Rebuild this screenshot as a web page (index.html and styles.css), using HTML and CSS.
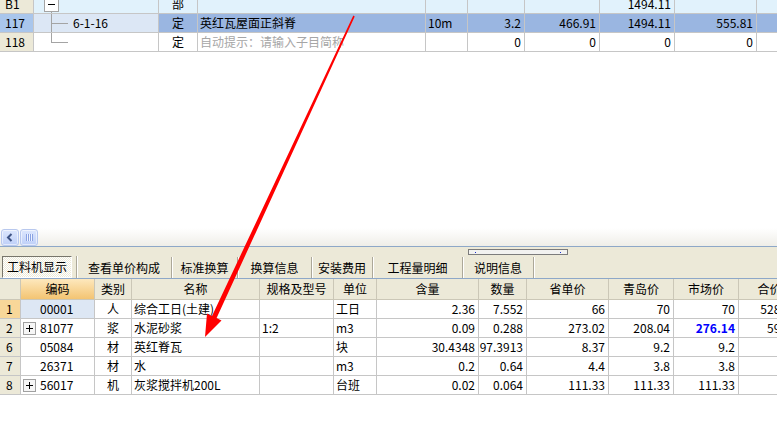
FILE: index.html
```html
<!DOCTYPE html>
<html lang="zh">
<head>
<meta charset="utf-8">
<title>工料机显示</title>
<link rel="stylesheet" href="styles.css">
</head>
<body>
<div class="app">
  <div class="top-pane">
    <div class="grid top-grid">
      <div class="c rh">B1</div>
      <div class="c tree t-root b1"><span class="tbox"></span></div>
      <div class="c ctr b1">部</div>
      <div class="c b1"></div>
      <div class="c b1"></div>
      <div class="c b1"></div>
      <div class="c b1"></div>
      <div class="c r b1">1494.11</div>
      <div class="c b1"></div>
      <div class="c b1"></div>

      <div class="c rh rh-sel">117</div>
      <div class="c tree t-mid sel-soft">6-1-16</div>
      <div class="c ctr sel">定</div>
      <div class="c sel">英红瓦屋面正斜脊</div>
      <div class="c sel">10m</div>
      <div class="c r sel">3.2</div>
      <div class="c r sel">466.91</div>
      <div class="c r sel">1494.11</div>
      <div class="c r sel">555.81</div>
      <div class="c sel"></div>

      <div class="c rh">118</div>
      <div class="c tree t-last"></div>
      <div class="c ctr">定</div>
      <div class="c hint">自动提示：请输入子目简称</div>
      <div class="c"></div>
      <div class="c r">0</div>
      <div class="c r">0</div>
      <div class="c r">0</div>
      <div class="c r">0</div>
      <div class="c"></div>
    </div>
  </div>

  <div class="hscroll">
    <span class="sbtn"><svg width="8" height="9" viewBox="0 0 8 9"><path d="M5.5 1 L2 4.5 L5.5 8" fill="none" stroke="#3f5485" stroke-width="2"/></svg></span>
    <span class="sbtn thumb"><span class="grip"></span></span>
  </div>

  <div class="tabbar">
    <div class="splitter"><i></i><i></i></div>
    <div class="tab first"><span class="active">工料机显示</span></div>
    <div class="tab t2">查看单价构成</div>
    <div class="tab t3">标准换算</div>
    <div class="tab t4">换算信息</div>
    <div class="tab t5">安装费用</div>
    <div class="tab t6">工程量明细</div>
    <div class="tab t7">说明信息</div>
  </div>

  <div class="grid bottom-grid">
    <div class="c h"></div>
    <div class="c h h-act">编码</div>
    <div class="c h">类别</div>
    <div class="c h">名称</div>
    <div class="c h">规格及型号</div>
    <div class="c h">单位</div>
    <div class="c h">含量</div>
    <div class="c h">数量</div>
    <div class="c h">省单价</div>
    <div class="c h">青岛价</div>
    <div class="c h">市场价</div>
    <div class="c h">合价</div>

    <div class="c rn rn-act">1</div>
    <div class="c code code-sel">00001</div>
    <div class="c ctr">人</div>
    <div class="c">综合工日(土建)</div>
    <div class="c"></div>
    <div class="c">工日</div>
    <div class="c r">2.36</div>
    <div class="c r">7.552</div>
    <div class="c r">66</div>
    <div class="c r">70</div>
    <div class="c r">70</div>
    <div class="c r">528.64</div>

    <div class="c rn">2</div>
    <div class="c code"><span class="exp"></span>81077</div>
    <div class="c ctr">浆</div>
    <div class="c">水泥砂浆</div>
    <div class="c">1:2</div>
    <div class="c">m3</div>
    <div class="c r">0.09</div>
    <div class="c r">0.288</div>
    <div class="c r">273.02</div>
    <div class="c r">208.04</div>
    <div class="c r hl">276.14</div>
    <div class="c r">59.53</div>

    <div class="c rn">6</div>
    <div class="c code">05084</div>
    <div class="c ctr">材</div>
    <div class="c">英红脊瓦</div>
    <div class="c"></div>
    <div class="c">块</div>
    <div class="c r">30.4348</div>
    <div class="c r">97.3913</div>
    <div class="c r">8.37</div>
    <div class="c r">9.2</div>
    <div class="c r">9.2</div>
    <div class="c"></div>

    <div class="c rn">7</div>
    <div class="c code">26371</div>
    <div class="c ctr">材</div>
    <div class="c">水</div>
    <div class="c"></div>
    <div class="c">m3</div>
    <div class="c r">0.2</div>
    <div class="c r">0.64</div>
    <div class="c r">4.4</div>
    <div class="c r">3.8</div>
    <div class="c r">3.8</div>
    <div class="c"></div>

    <div class="c rn">8</div>
    <div class="c code"><span class="exp"></span>56017</div>
    <div class="c ctr">机</div>
    <div class="c">灰浆搅拌机200L</div>
    <div class="c"></div>
    <div class="c">台班</div>
    <div class="c r">0.02</div>
    <div class="c r">0.064</div>
    <div class="c r">111.33</div>
    <div class="c r">111.33</div>
    <div class="c r">111.33</div>
    <div class="c"></div>
  </div>

  <svg class="arrow" width="777" height="447" viewBox="0 0 777 447">
    <polygon points="353.3,15.6 354.7,16.4 216.6,318.1 221.5,320.4 205,337 207,313.6 212,315.9" fill="#ff0000"/>
  </svg>
</div>
</body>
</html>
```

FILE: styles.css
```css
* { box-sizing: border-box; margin: 0; padding: 0; }

html, body {
  width: 777px;
  height: 447px;
  overflow: hidden;
  background: #ffffff;
}

body {
  font-family: "Noto Sans CJK SC", "Noto Sans", sans-serif;
  font-size: 12px;
  color: #000;
}

.app {
  position: relative;
  width: 777px;
  height: 447px;
  overflow: hidden;
}

/* ---------- grids ---------- */
.grid {
  display: grid;
  grid-auto-rows: 19px;
  width: 801px;
}

.top-pane {
  height: 228px;
  overflow: hidden;
}

.top-grid {
  grid-template-columns: 34px 125px 39px 228px 42px 57px 75px 75px 82px 44px;
  margin-top: -5px;
}

.c {
  display: flex;
  align-items: center;
  padding: 0 2px;
  border-right: 1px solid #c6c6c6;
  border-bottom: 1px solid #c6c6c6;
  white-space: nowrap;
  overflow: hidden;
  line-height: 1;
}

.r { justify-content: flex-end; padding-right: 3px; }
.ctr { justify-content: center; }

.rh {
  background: #ece9d8;
  padding-left: 5px;
}
.rh-sel { background: #a9c6ec; }

.b1 { background-color: #e1f2fc; }
.sel { background-color: #9ab6e1; }
.sel-soft { background-color: #dce7f5; }
.hint { color: #a6a6a6; }

/* tree connectors */
.tree { padding-left: 10px; }
.t-root {
  background-image: linear-gradient(#a4a4a4, #a4a4a4);
  background-position: 17px 17px;
  background-size: 1px 2px;
  background-repeat: no-repeat;
}
.t-mid {
  padding-left: 39px;
  background-image: linear-gradient(#a4a4a4, #a4a4a4), linear-gradient(#a4a4a4, #a4a4a4);
  background-position: 17px 0, 17px 9px;
  background-size: 1px 100%, 17px 1px;
  background-repeat: no-repeat;
}
.t-last {
  background-image: linear-gradient(#a4a4a4, #a4a4a4), linear-gradient(#a4a4a4, #a4a4a4);
  background-position: 17px 0, 17px 9px;
  background-size: 1px 10px, 17px 1px;
  background-repeat: no-repeat;
}
.tbox {
  width: 15px;
  height: 15px;
  border: 1px solid #a4a4a4;
  background: linear-gradient(#000, #000) center / 7px 1px no-repeat, #fff;
}

/* ---------- horizontal scrollbar ---------- */
.hscroll {
  height: 18px;
  display: flex;
  align-items: flex-end;
  gap: 1px;
  padding-left: 1px;
  background: linear-gradient(#ffffff, #efeee8);
}
.sbtn {
  width: 18px;
  height: 17px;
  display: flex;
  align-items: center;
  justify-content: center;
  border: 1px solid #b8c8ee;
  border-radius: 3px;
  background: linear-gradient(#dce6fd, #bfd0f8);
  box-shadow: inset 0 0 0 1px rgba(255, 255, 255, 0.55);
}
.grip {
  width: 7px;
  height: 7px;
  background: repeating-linear-gradient(90deg, #8aa2e2 0 1px, #eef3ff 1px 2px);
}

/* ---------- tab bar ---------- */
.tabbar {
  position: relative;
  height: 33px;
  display: flex;
  align-items: flex-end;
  padding-left: 2px;
  background: #ece9d8;
  border-top: 1px solid #8ea8c8;
  border-bottom: 1px solid #8ea8c8;
}
.splitter {
  position: absolute;
  left: 468px;
  top: 2px;
  width: 100px;
  height: 6px;
  border: 1px solid #7c7c7c;
  background: #f2f2f0;
  display: flex;
  justify-content: space-between;
  align-items: center;
  padding: 0 6px;
}
.splitter i {
  width: 1px;
  height: 1px;
  background: #1a2fd0;
}
.tab {
  height: 21px;
  display: flex;
  align-items: center;
  justify-content: center;
  border-right: 1px solid #aca899;
  box-shadow: 1px 0 0 #ffffff;
  line-height: 1;
  white-space: nowrap;
}
.tab.first {
  width: 75px;
  height: 22px;
  justify-content: flex-start;
  align-items: stretch;
  padding-bottom: 0;
}
.active {
  width: 70px;
  display: flex;
  align-items: center;
  justify-content: center;
  border: 1px solid;
  border-color: #77756b #ffffff #ffffff #77756b;
  background: repeating-conic-gradient(#ffffff 0 25%, #ece9d8 0 50%) 0 0 / 2px 2px;
}
.t2 { width: 95px; }
.t3 { width: 66px; }
.t4 { width: 74px; }
.t5 { width: 61px; }
.t6 { width: 90px; }
.t7 { width: 71px; }

/* ---------- bottom grid ---------- */
.bottom-grid {
  grid-template-columns: 21px 74px 37px 128px 74px 43px 102px 48px 82px 65px 65px 62px;
  grid-template-rows: 21px;
}
.h {
  justify-content: center;
  background: #ece9d8;
  border-color: #cbc7b7;
}
.h-act { background: linear-gradient(#fde8bd, #f3c472); }
.rn {
  background: #ece9d8;
  padding-left: 6px;
}
.rn-act { background: #f8d799; }
.code { padding-left: 19px; }
.code-sel { background: #dde7f4; }
.exp {
  width: 13px;
  height: 13px;
  margin-left: -17px;
  margin-right: 4px;
  border: 1px solid #a0a0a0;
  background:
    linear-gradient(#000, #000) center / 7px 1px no-repeat,
    linear-gradient(#000, #000) center / 1px 7px no-repeat,
    #f6f6f6;
}
.hl {
  color: #0000ff;
  font-weight: bold;
}

/* ---------- annotation arrow ---------- */
.arrow {
  position: absolute;
  left: 0;
  top: 0;
  pointer-events: none;
}
```
